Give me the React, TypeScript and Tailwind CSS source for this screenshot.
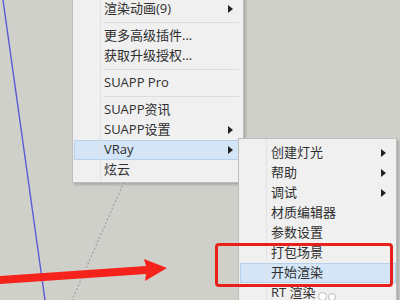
import React from "react";

type Item = { label?: string; arrow?: boolean; active?: boolean; sep?: boolean };

const mainItems: Item[] = [
  { label: "渲染动画(9)", arrow: true },
  { sep: true },
  { label: "更多高级插件..." },
  { label: "获取升级授权..." },
  { sep: true },
  { label: "SUAPP Pro" },
  { sep: true },
  { label: "SUAPP资讯" },
  { label: "SUAPP设置", arrow: true },
  { label: "VRay", arrow: true, active: true },
  { label: "炫云" },
];

const subItems: Item[] = [
  { label: "创建灯光", arrow: true },
  { label: "帮助", arrow: true },
  { label: "调试", arrow: true },
  { label: "材质编辑器" },
  { label: "参数设置" },
  { label: "打包场景" },
  { label: "开始渲染", active: true },
  { label: "RT 渲染" },
];

const Arrow = () => (
  <svg width="5" height="8" viewBox="0 0 5 8" className="shrink-0">
    <path d="M0 0 L5 4 L0 8 Z" fill="#222" />
  </svg>
);

const MenuRow = ({ item, gutter }: { item: Item; gutter: string }) => {
  if (item.sep) {
    return (
      <div className="h-[7px] flex items-center">
        <div className={`${gutter} shrink-0`} />
        <div className="flex-1 h-px bg-[#dcdcdc] mr-[4px]" />
      </div>
    );
  }
  return (
    <div
      className={`h-[20px] flex items-center pr-[9px] border ${
        item.active ? "bg-[#d3e5f6] border-[#b4d2ee]" : "border-transparent"
      }`}
    >
      <div className={`${gutter} shrink-0`} />
      <span className="flex-1 whitespace-nowrap">{item.label}</span>
      {item.arrow && <Arrow />}
    </div>
  );
};

export default function App() {
  return (
    <div
      className="relative w-[400px] h-[300px] overflow-hidden bg-[#d0d0cb] text-[13px] text-[#2e2e2e]"
      style={{ fontFamily: "'Open Sans', 'Noto Sans CJK SC', sans-serif" }}
    >
      {/* canvas lines */}
      <svg className="absolute inset-0" width="400" height="300">
        <line x1="3" y1="0" x2="45" y2="300" stroke="#5a5ad6" strokeWidth="1.4" />
        <line x1="124" y1="182" x2="72" y2="300" stroke="#a89a9a" strokeWidth="1.2" strokeDasharray="2 2" />
        <path d="M0 276 L146 266 L144 259 L167 268 L145 281 L146 274 L0 284 Z" fill="#f5231c" />
      </svg>

      {/* main menu */}
      <div className="absolute left-[72px] top-[-2px] w-[172px] bg-[#f0f0f0] border border-[#bdbdbd] pb-[2px] pl-px shadow-[2px_2px_2px_rgba(0,0,0,0.18)]">
        <div className="absolute left-[27px] top-0 bottom-0 w-px bg-[#e2e2e2]" />
        {mainItems.map((it, i) => (
          <MenuRow key={i} item={it} gutter="w-[29px]" />
        ))}
      </div>

      {/* vray submenu */}
      <div className="absolute left-[238px] top-[138px] w-[159px] h-[180px] bg-[#f0f0f0] border border-[#bdbdbd] pt-[4px] pl-px shadow-[2px_2px_2px_rgba(0,0,0,0.18)]">
        <div className="absolute left-[27px] top-0 bottom-0 w-px bg-[#e2e2e2]" />
        {subItems.map((it, i) => (
          <MenuRow key={i} item={it} gutter="w-[30px]" />
        ))}
      </div>

      {/* red highlight box */}
      <div className="absolute left-[215px] top-[243px] w-[178px] h-[44px] border-[3px] border-[#e8201c] rounded-[4px]" />

      {/* busy cursor */}
      <div className="absolute left-[318px] top-[292px] w-[9px] h-[9px] rounded-full bg-white border border-[#bbb]" />
      <div className="absolute left-[328px] top-[293px] w-[8px] h-[8px] rounded-full bg-white border border-[#bbb]" />
    </div>
  );
}
